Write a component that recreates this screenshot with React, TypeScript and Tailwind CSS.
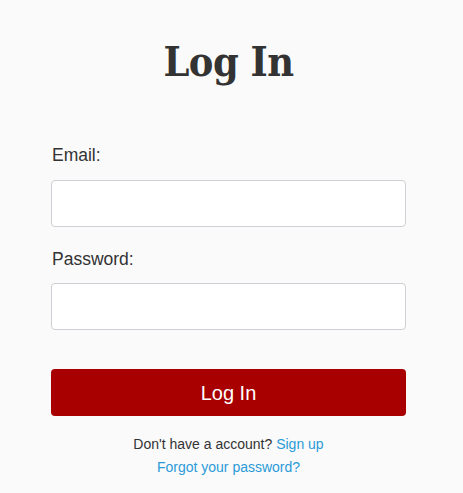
export default function App() {
  return (
    <div className="min-h-[493px] w-full bg-[#fafafa] text-[#333] font-['Liberation_Sans',Arial,sans-serif]">
      <div className="ml-[51px] w-[355px] pt-[36px]">
        <h1 className="text-center text-[41px] font-bold leading-[52px] text-[#333] font-['DejaVu_Serif_Condensed','Liberation_Serif',serif] tracking-[-0.5px]">Log In</h1>
        <form className="mt-[57px] flex flex-col" onSubmit={(e) => e.preventDefault()}>
          <label className="block text-[17.5px] leading-[20px] pl-[1px]">Email:</label>
          <input type="email" className="mt-[15px] h-[47px] w-full rounded-[4px] border border-[#cdd0d4] bg-white px-3" />
          <label className="mt-[22px] block text-[17.5px] leading-[20px] pl-[1px]">Password:</label>
          <input type="password" className="mt-[14px] h-[47px] w-full rounded-[4px] border border-[#cdd0d4] bg-white px-3" />
          <button type="submit" className="mt-[39px] h-[47px] w-full rounded-[4px] bg-[#a80000] text-[20px] text-white">Log In</button>
          <div className="mt-[17px] text-center text-[14px] leading-[23px]">
            <div>Don't have a account? <a href="#" className="text-[#2a9ad8]">Sign up</a></div>
            <div><a href="#" className="text-[#2a9ad8]">Forgot your password?</a></div>
          </div>
        </form>
      </div>
    </div>
  );
}
